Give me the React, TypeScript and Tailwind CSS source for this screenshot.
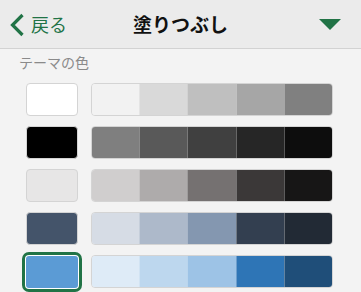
import React from "react";

const rows: { swatch: string; strip: string[] }[] = [
  { swatch: "#ffffff", strip: ["#f2f2f2", "#d9d9d9", "#bfbfbf", "#a6a6a6", "#808080"] },
  { swatch: "#000000", strip: ["#7f7f7f", "#595959", "#404040", "#262626", "#0d0d0d"] },
  { swatch: "#e7e6e6", strip: ["#d0cece", "#aeabab", "#757171", "#3b3838", "#171616"] },
  { swatch: "#44546a", strip: ["#d6dce5", "#adb9ca", "#8497b0", "#333f50", "#222a35"] },
  { swatch: "#5b9bd5", strip: ["#deebf7", "#bdd7ee", "#9dc3e6", "#2e75b6", "#1f4e79"] },
];

export default function App() {
  return (
    <div
      className="w-[361px] h-[292px] overflow-hidden bg-[#f3f3f3]"
      style={{ fontFamily: '"Noto Sans CJK JP", "Noto Sans", sans-serif' }}
    >
      <div className="h-[49px] bg-[#ebebeb] border-b border-[#d2d2d2] grid grid-cols-[1fr_auto_1fr] items-center">
        <div className="flex items-center pl-[9px]">
          <svg width="16" height="24" viewBox="0 0 16 24" className="mt-[1px]">
            <path d="M13.5 2 L3.5 12 L13.5 22" fill="none" stroke="#217346" strokeWidth="3.2" />
          </svg>
          <span className="ml-[6px] text-[18px] leading-none text-[#217346]">戻る</span>
        </div>
        <div className="text-[19px] font-bold leading-none text-[#111] mt-[-2px]">塗りつぶし</div>
        <div className="flex justify-end pr-[20px]">
          <svg width="22" height="11" viewBox="0 0 22 11">
            <path d="M0 0 L22 0 L11 11 Z" fill="#217346" />
          </svg>
        </div>
      </div>
      <div className="pl-[19px] pt-[3px] text-[14px] leading-[20px] text-[#8a8a8a]">テーマの色</div>
      <div className="flex flex-col gap-[10px] mt-[11px] pl-[26px]">
        {rows.map((r, i) => (
          <div key={i} className="flex items-center h-[33px]">
            <div
              className={
                i === 4
                  ? "w-[52px] h-[32px] rounded-[3px] ring-[3px] ring-[#217346] ring-offset-1 ring-offset-white"
                  : "w-[52px] h-[33px] rounded-[4px] border border-[#d4d4d4]"
              }
              style={{ backgroundColor: r.swatch }}
            />
            <div className="ml-[13px] w-[242px] h-[33px] rounded-[4px] border border-[#d4d4d4] overflow-hidden flex">
              {r.strip.map((c, j) => (
                <div
                  key={j}
                  className={j > 0 ? "flex-1 border-l border-[rgba(255,255,255,0.3)]" : "flex-1"}
                  style={{ backgroundColor: c }}
                />
              ))}
            </div>
          </div>
        ))}
      </div>
    </div>
  );
}
